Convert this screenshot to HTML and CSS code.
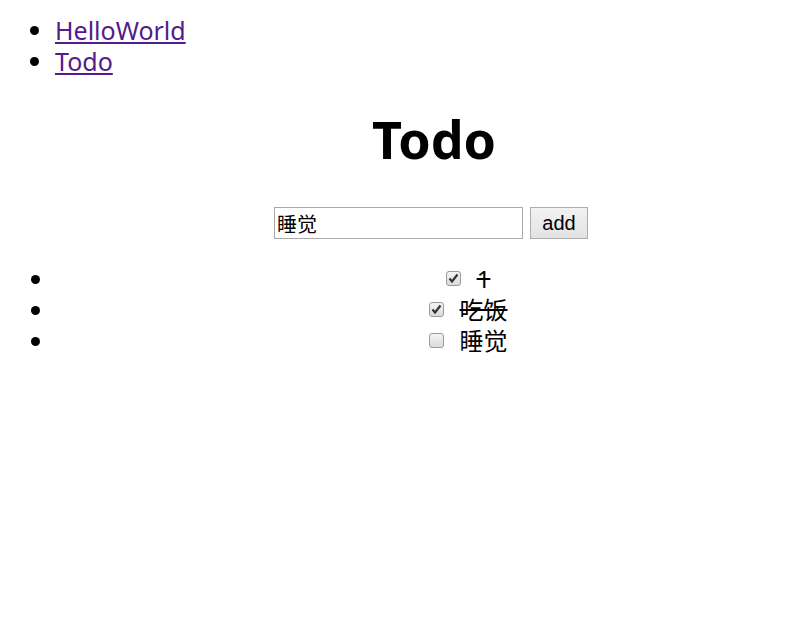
FILE: index.html
```html
<!DOCTYPE html>
<html lang="zh-CN">
<head>
<meta charset="utf-8">
<title>Todo</title>
<link rel="stylesheet" href="styles.css">
</head>
<body>
<div id="app">
  <ul class="nav">
    <li><a href="#/hello">HelloWorld</a></li>
    <li><a href="#/todo">Todo</a></li>
  </ul>
  <div class="todo">
    <h1 class="title">Todo</h1>
    <div class="add-row">
      <input class="add-input" type="text" value="睡觉">
      <button class="add-btn" type="button">add</button>
    </div>
    <ul class="items">
      <li class="item"><input class="check" type="checkbox" checked><span class="label done">1</span></li>
      <li class="item"><input class="check" type="checkbox" checked><span class="label done">吃饭</span></li>
      <li class="item"><input class="check" type="checkbox"><span class="label">睡觉</span></li>
    </ul>
  </div>
</div>
</body>
</html>
```
FILE: styles.css
```css
body {
  margin: 0 8px 8px;
  font-family: "Noto Sans", "Noto Sans CJK SC", sans-serif;
  font-size: 24px;
  color: #000;
  background: #fff;
}

.nav {
  margin: 15px 0 0;
  padding-left: 47px;
}

.nav li {
  line-height: 31px;
  font-size: 25px;
}

.nav a {
  color: #551a8b;
}

.title {
  margin: 30px 0 0;
  padding-left: 66px;
  text-align: center;
  font-size: 52px;
  font-weight: bold;
  line-height: 64px;
}

.add-row {
  margin-top: 36px;
  padding-left: 60px;
  display: flex;
  justify-content: center;
  gap: 7px;
}

.add-input {
  box-sizing: border-box;
  width: 249px;
  height: 32px;
  margin: 0;
  padding: 0 2px;
  border: 1px solid #a9a9a9;
  font-family: "Liberation Sans", "Noto Sans CJK SC", sans-serif;
  font-size: 20px;
  color: #000;
}

.add-btn {
  box-sizing: border-box;
  width: 58px;
  height: 32px;
  margin: 0;
  padding: 0;
  border: 1px solid #adadad;
  border-radius: 0;
  background: linear-gradient(#f2f2f2, #e3e3e3);
  font-family: "Liberation Sans", sans-serif;
  font-size: 20px;
  color: #000;
}

.items {
  margin: 24px 0 0;
  padding-left: 47px;
}

.item {
  line-height: 31px;
  text-align: center;
  padding-left: 87px;
}

.check {
  -webkit-appearance: none;
  appearance: none;
  box-sizing: border-box;
  width: 15px;
  height: 15px;
  margin: 0 16px 0 0;
  vertical-align: 2px;
  border: 1px solid #9a9a9a;
  border-radius: 3px;
  background: linear-gradient(#f4f4f4, #dadada);
}

.check:checked {
  background: url("data:image/svg+xml,%3Csvg xmlns='http://www.w3.org/2000/svg' width='13' height='13' viewBox='0 0 13 13'%3E%3Cpath d='M2.5 6.5 L5 9.5 L10.5 2.5' fill='none' stroke='%23333' stroke-width='2.2'/%3E%3C/svg%3E") center / 13px 13px no-repeat, linear-gradient(#f4f4f4, #dadada);
}

.done {
  text-decoration: line-through;
}
```
